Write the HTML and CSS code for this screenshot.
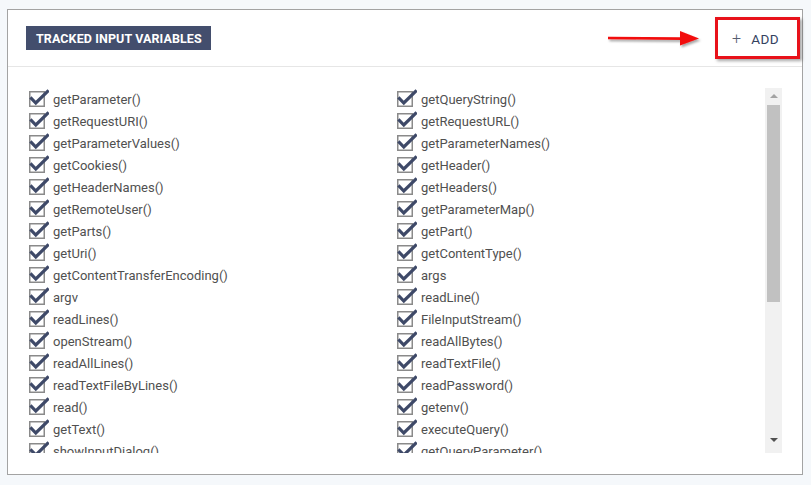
FILE: index.html
```html
<!DOCTYPE html>
<html lang="en">
<head>
  <meta charset="UTF-8">
  <title>Tracked Input Variables</title>
  <link rel="stylesheet" href="styles.css">
</head>
<body>
  <div class="card">
    <div class="card-head">
      <div class="title">TRACKED INPUT VARIABLES</div>
      <button class="add-btn"><span class="plus">+</span>ADD</button>
      <svg class="arrow" width="100" height="24" viewBox="0 0 100 24">
        <defs>
          <filter id="sh" x="-10%" y="-30%" width="130%" height="180%">
            <feDropShadow dx="1.5" dy="2" stdDeviation="1.2" flood-color="#000" flood-opacity="0.35"/>
          </filter>
        </defs>
        <g filter="url(#sh)" fill="#f20d0d">
          <path d="M2 9.8 L76 10.2 L76 13 L2 12.2 Z"/>
          <path d="M74 4 L93 11.5 L74 18.5 Z"/>
        </g>
      </svg>
    </div>

    <div class="card-body">
      <ul class="vars" id="vars"></ul>
      <div class="scrollbar">
        <div class="sb-up"></div>
        <div class="sb-thumb"></div>
        <div class="sb-down"></div>
      </div>
    </div>
  </div>

  <script>
    // Names of the tracked calls, row by row (left, right)
    const names = [
      'getParameter()', 'getQueryString()',
      'getRequestURI()', 'getRequestURL()',
      'getParameterValues()', 'getParameterNames()',
      'getCookies()', 'getHeader()',
      'getHeaderNames()', 'getHeaders()',
      'getRemoteUser()', 'getParameterMap()',
      'getParts()', 'getPart()',
      'getUri()', 'getContentType()',
      'getContentTransferEncoding()', 'args',
      'argv', 'readLine()',
      'readLines()', 'FileInputStream()',
      'openStream()', 'readAllBytes()',
      'readAllLines()', 'readTextFile()',
      'readTextFileByLines()', 'readPassword()',
      'read()', 'getenv()',
      'getText()', 'executeQuery()',
      'showInputDialog()', 'getQueryParameter()'
    ];

    const list = document.querySelector('#vars');
    const check = '<svg class="cb" width="20" height="18" viewBox="0 0 20 18">' +
      '<rect x="0.75" y="2.75" width="14.5" height="14.5" fill="#fff" stroke="#8a8a8a" stroke-width="1.5"/>' +
      '<path d="M2.5 9.5 L6.8 14 L18.5 2.5" fill="none" stroke="#3e4968" stroke-width="3.2" stroke-linecap="square"/>' +
      '</svg>';

    names.forEach(name => {
      const li = document.createElement('li');
      li.className = 'var';
      li.innerHTML = check + '<span>' + name + '</span>';
      list.appendChild(li);
    });
  </script>
</body>
</html>
```

FILE: styles.css
```css
* {
  margin: 0;
  padding: 0;
  box-sizing: border-box;
}

body {
  background-color: #f5f8fb;
  padding: 9px 8px 0 7px;
  font-family: Roboto, "Liberation Sans", sans-serif;
}

.card {
  width: 796px;
  height: 466px;
  background-color: #fff;
  border: 1px solid #a3a3a3;
  display: flex;
  flex-direction: column;
}

.card-head {
  position: relative;
  flex-shrink: 0;
  height: 57px;
  display: flex;
  align-items: center;
  justify-content: space-between;
  padding: 0 2px 1px 18px;
  border-bottom: 1px solid #e6e6e6;
}

.title {
  background-color: #434e6d;
  color: #fff;
  font-weight: 700;
  font-size: 12.5px;
  letter-spacing: 0.1px;
  height: 24px;
  line-height: 25px;
  padding: 0 9px 0 10px;
}

.add-btn {
  width: 85px;
  height: 42px;
  border: 3px solid #e8121a;
  background-color: #fff;
  box-shadow: 2px 2px 3px rgba(0, 0, 0, 0.35);
  font-family: Roboto, "Liberation Sans", sans-serif;
  font-size: 13.5px;
  color: #34425f;
  letter-spacing: 0.4px;
  padding: 1px 4px 0 0;
  cursor: pointer;
}

.plus {
  font-weight: 300;
  font-size: 16px;
  color: #555d70;
  margin-right: 10px;
}

.arrow {
  position: absolute;
  left: 598px;
  top: 17px;
}

.card-body {
  flex: 1;
  min-height: 0;
  display: flex;
  padding: 21px 20px 21px 0;
}

.vars {
  flex: 1;
  list-style: none;
  overflow: hidden;
  display: grid;
  grid-template-columns: 368px 368px;
  grid-auto-rows: 22px;
  padding-left: 21px;
}

.var {
  display: flex;
  align-items: center;
  font-size: 13px;
  color: #505050;
}

.cb {
  flex-shrink: 0;
  margin-right: 4px;
  margin-top: -3px;
}

.scrollbar {
  width: 17px;
  background-color: #f1f1f1;
  display: flex;
  flex-direction: column;
  align-items: center;
}

.sb-up, .sb-down {
  width: 0;
  height: 0;
  border-left: 4px solid transparent;
  border-right: 4px solid transparent;
}

.sb-up {
  border-bottom: 4px solid #a3a3a3;
  margin: 6px 0 7px;
}

.sb-thumb {
  width: 13px;
  height: 197px;
  background-color: #c1c1c1;
}

.sb-down {
  border-top: 4px solid #505050;
  margin-top: auto;
  margin-bottom: 11px;
}
```
